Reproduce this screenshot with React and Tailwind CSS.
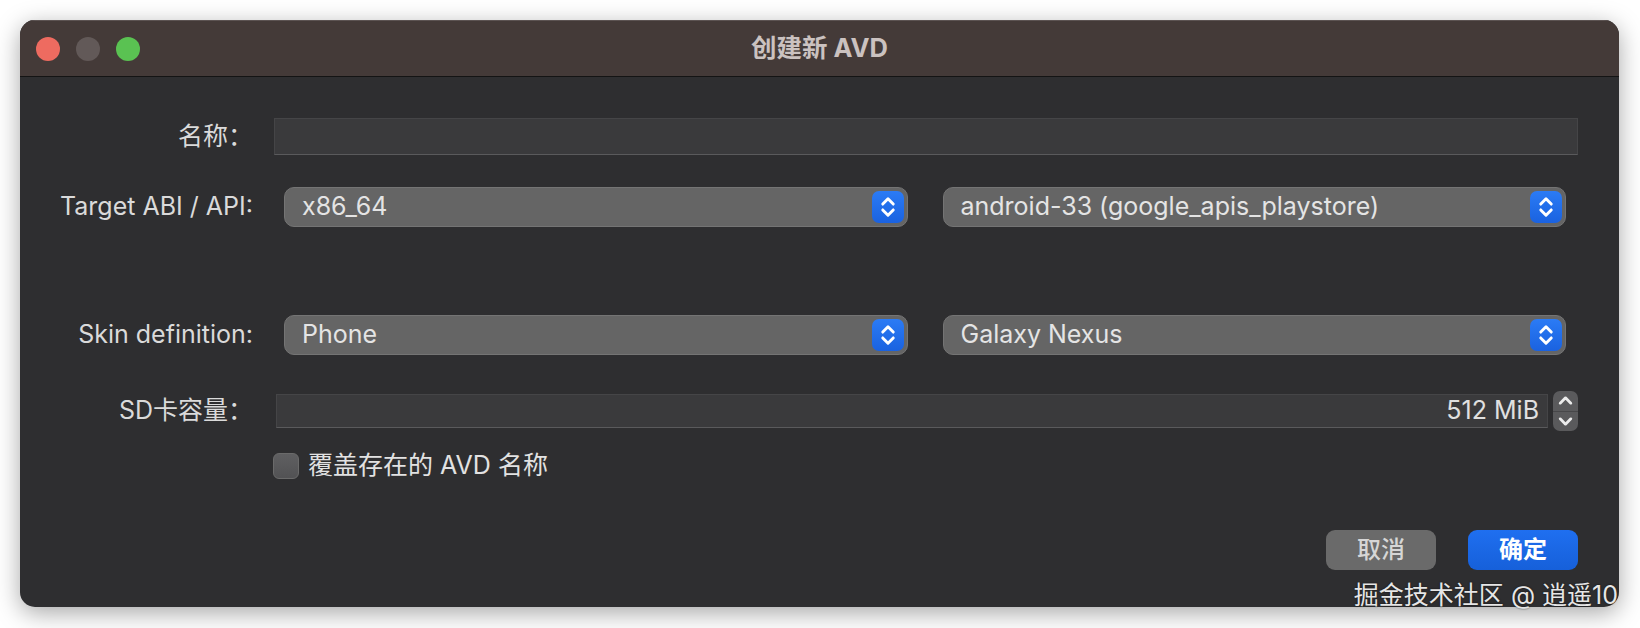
import React from 'react';

const font = { fontFamily: 'Inter, "Noto Sans CJK SC", sans-serif' };

function UpDown({ className = '' }) {
  return (
    <svg viewBox="0 0 16 24" className={className} fill="none" stroke="currentColor" strokeWidth="2.5" strokeLinecap="round" strokeLinejoin="round">
      <path d="M3.5 9.5 L8 5 L12.5 9.5" />
      <path d="M3.5 14.5 L8 19 L12.5 14.5" />
    </svg>
  );
}

function Select({ value }) {
  return (
    <div className="flex h-[40px] items-center justify-between rounded-[10px] border border-[#747474] bg-[#656565] pl-[17px] pr-[3px]">
      <span className="text-[25px] text-[#e4e4e4]">{value}</span>
      <div className="flex h-[32px] w-[32px] items-center justify-center rounded-[7px] bg-gradient-to-b from-[#2b7bf5] to-[#1a62e0] text-white">
        <UpDown className="h-[28px] w-[20px]" />
      </div>
    </div>
  );
}

function Label({ children }) {
  return (
    <div className="w-[236px] shrink-0 pr-[3px] text-right text-[25px] whitespace-nowrap text-[#dadada]">{children}</div>
  );
}

export default function App() {
  return (
    <div className="relative h-[628px] w-[1640px] bg-white p-[20px]" style={font}>
      <div className="flex w-[1599px] flex-col overflow-hidden rounded-[15px] bg-[#2e2e30] shadow-[0_6px_24px_rgba(0,0,0,0.35)]">
        {/* Title bar */}
        <div className="relative flex h-[57px] items-center border-b border-[#141414] border-t border-t-[#5c5352] bg-[#443a38]">
          <div className="flex items-center gap-[16px] pl-[16px]">
            <span className="h-[24px] w-[24px] rounded-full bg-[#ee6b60]" />
            <span className="h-[24px] w-[24px] rounded-full bg-[#625958]" />
            <span className="h-[24px] w-[24px] rounded-full bg-[#5ac252]" />
          </div>
          <div className="absolute inset-0 flex items-center justify-center text-[25.5px] font-bold text-[#cbc2c0]">创建新 AVD</div>
        </div>

        {/* Body */}
        <div className="flex flex-col pt-[41px] pb-[37px] pr-[41px]">
          <div className="flex h-[37px] items-center">
            <Label>名称：</Label>
            <div className="ml-[18px] h-[37px] flex-1 border border-[#454547] border-b-[#5a5a5c] bg-[#3a3a3c]" />
          </div>

          <div className="mt-[32px] flex h-[40px] items-center">
            <Label>Target ABI / API:</Label>
            <div className="ml-[28px] mr-[12px] grid flex-1 grid-cols-2 gap-[35px]">
              <Select value="x86_64" />
              <Select value="android-33 (google_apis_playstore)" />
            </div>
          </div>

          <div className="mt-[88px] flex h-[40px] items-center">
            <Label>Skin definition:</Label>
            <div className="ml-[28px] mr-[12px] grid flex-1 grid-cols-2 gap-[35px]">
              <Select value="Phone" />
              <Select value="Galaxy Nexus" />
            </div>
          </div>

          <div className="mt-[36px] flex h-[40px] items-center">
            <Label>SD卡容量：</Label>
            <div className="ml-[20px] flex h-[34px] flex-1 items-center justify-end border border-[#454547] border-b-[#5a5a5c] bg-[#3a3a3c] pr-[8px]">
              <span className="text-[25px] text-[#e0e0e0]">512 MiB</span>
            </div>
            <div className="ml-[5px] flex h-[40px] w-[25px] flex-col overflow-hidden rounded-[7px] bg-[#5a5a5c] text-[#ececec]">
              <div className="flex flex-1 items-center justify-center border-b border-[#474749]">
                <svg viewBox="0 0 16 10" className="h-[11px] w-[17px]" fill="none" stroke="currentColor" strokeWidth="2.6" strokeLinecap="round" strokeLinejoin="round">
                  <path d="M3 7.5 L8 2.5 L13 7.5" />
                </svg>
              </div>
              <div className="flex flex-1 items-center justify-center">
                <svg viewBox="0 0 16 10" className="h-[11px] w-[17px]" fill="none" stroke="currentColor" strokeWidth="2.6" strokeLinecap="round" strokeLinejoin="round">
                  <path d="M3 2.5 L8 7.5 L13 2.5" />
                </svg>
              </div>
            </div>
          </div>

          <div className="mt-[21px] flex h-[28px] items-center pl-[253px]">
            <span className="h-[26px] w-[26px] rounded-[6px] border border-[#6a6a6a] bg-gradient-to-b from-[#5f5f61] to-[#525254]" />
            <span className="ml-[9px] text-[25px] text-[#e2e2e2]">覆盖存在的 AVD 名称</span>
          </div>

          <div className="mt-[50px] flex h-[40px] justify-end gap-[32px]">
            <button className="h-[40px] w-[110px] rounded-[9px] bg-[#6a6a6a] text-[24px] font-medium text-[#d6d6d6]">取消</button>
            <button className="h-[40px] w-[110px] rounded-[9px] bg-gradient-to-b from-[#1f6ff0] to-[#1660da] text-[24px] font-bold text-white">确定</button>
          </div>
        </div>
      </div>

      <div className="absolute right-[22px] bottom-[20px] text-[25px] leading-none text-[#e6e6e6] [text-shadow:0_0_2px_rgba(0,0,0,0.7)]">
        掘金技术社区 @ 逍遥10
      </div>
    </div>
  );
}
